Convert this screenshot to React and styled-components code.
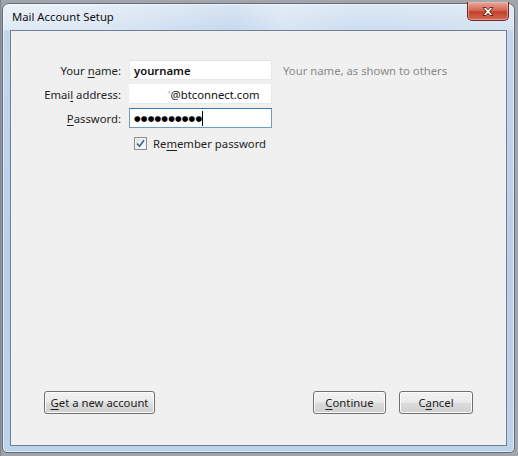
import styled, { createGlobalStyle } from 'styled-components';

const GlobalStyle = createGlobalStyle`
  html, body {
    margin: 0;
    padding: 0;
    background: #8e9095;
  }
  #root {
    width: 518px;
    height: 456px;
    overflow: hidden;
  }
`;

const font = `"Noto Sans", "Open Sans", "Liberation Sans", sans-serif`;
const size = '11.3px';

const Screen = styled.div`
  box-sizing: border-box;
  width: 518px;
  height: 456px;
  padding: 3px 3px 3px 2px;
  background: linear-gradient(to right, #7d7f83 0, #a2a6ab 2px, #a2a6ab 100%);
`;

const Window = styled.div`
  position: relative;
  box-sizing: border-box;
  width: 513px;
  height: 450px;
  display: flex;
  flex-direction: column;
  border: 1px solid #5b6e86;
  border-radius: 7px 7px 5px 5px;
  background: linear-gradient(to bottom, #d9e6f3 0, #c3d7ec 30px, #b7cfe8 60%, #bcd3ea 100%);
  box-shadow: inset 0 0 0 1px rgba(255, 255, 255, 0.55);
  padding: 0 7px 6px 7px;
  font-family: ${font};
`;

const TitleBar = styled.div`
  height: 26px;
  display: flex;
  align-items: center;
  margin: 0 -7px;
  padding: 0 0 0 9px;
  border-radius: 6px 6px 0 0;
  background: linear-gradient(
    to right,
    rgba(255, 255, 255, 0.45) 0,
    rgba(255, 255, 255, 0.35) 20%,
    rgba(255, 255, 255, 0) 45%,
    rgba(255, 255, 255, 0.3) 55%,
    rgba(255, 255, 255, 0.1) 70%,
    rgba(255, 255, 255, 0.25) 100%
  );
`;

const Title = styled.span`
  font-size: ${size};
  color: #101010;
  margin-top: -2px;
`;

const CloseButton = styled.div`
  position: absolute;
  top: -2px;
  right: 5px;
  width: 42px;
  height: 19px;
  box-sizing: border-box;
  border: 1px solid #6b2b22;
  border-top: none;
  border-radius: 0 0 5px 5px;
  background: linear-gradient(to bottom, #e8a89c 0, #d66a56 45%, #c2412b 55%, #d26a55 100%);
  box-shadow: inset 0 0 0 1px rgba(255, 200, 190, 0.5);
  display: flex;
  align-items: center;
  justify-content: center;
`;

const Client = styled.div`
  flex: 1;
  box-sizing: border-box;
  border: 1px solid #6f8198;
  background: #f0f0f0;
  display: flex;
  flex-direction: column;
  justify-content: space-between;
  padding: 29px 33px 31px 33px;
`;

const Form = styled.div`
  display: grid;
  grid-template-columns: 77px 143px auto;
  column-gap: 8px;
  row-gap: 4px;
  align-items: center;
`;

const Label = styled.label`
  font-size: ${size};
  color: #1e1e1e;
  text-align: right;
  white-space: nowrap;
  u {
    text-decoration-thickness: 1px;
    text-underline-offset: 2px;
  }
`;

const Field = styled.div`
  box-sizing: border-box;
  height: 20px;
  display: flex;
  align-items: center;
  background: #ffffff;
  border: 1px solid ${(p) => (p.$focused ? '#6d9cc8' : '#e3e9ef')};
  border-top-color: ${(p) => (p.$focused ? '#3d7bad' : p.$bare ? '#ffffff' : '#dde3e9')};
  border-left-color: ${(p) => (p.$bare ? '#ffffff' : p.$focused ? '#6d9cc8' : '#e3e9ef')};
  padding-left: ${(p) => p.$indent || '4px'};
  font-size: ${size};
  color: #101010;
  font-weight: ${(p) => (p.$bold ? 600 : 400)};
  white-space: nowrap;
  overflow: hidden;
`;

const Dots = styled.span`
  font-family: "DejaVu Sans", sans-serif;
  font-size: 7.6px;
  letter-spacing: 0.2px;
  color: #000;
  margin-top: 1px;
`;

const Caret = styled.span`
  display: inline-block;
  width: 1px;
  height: 15px;
  background: #000;
  margin-left: 0;
`;

const Hint = styled.span`
  font-size: ${size};
  color: #8a8a8a;
  padding-left: 3px;
  white-space: nowrap;
`;

const CheckRow = styled.div`
  display: flex;
  align-items: center;
  gap: 6px;
  margin: 8px 0 0 90px;
  font-size: ${size};
  color: #1e1e1e;
  u {
    text-decoration-thickness: 1px;
    text-underline-offset: 2px;
  }
`;

const CheckBox = styled.span`
  box-sizing: border-box;
  width: 13px;
  height: 13px;
  border: 1px solid #8f8f8f;
  background: linear-gradient(135deg, #dcdcdc 0, #f4f4f4 60%, #ffffff 100%);
  box-shadow: inset 0 0 0 1px #f3f3f3;
  display: flex;
  align-items: center;
  justify-content: center;
`;

const ButtonRow = styled.div`
  display: flex;
  align-items: center;
  gap: 13px;
`;

const Spacer = styled.div`
  flex: 1;
`;

const Button = styled.button`
  box-sizing: border-box;
  width: ${(p) => p.$width};
  height: 23px;
  border: 1px solid #707070;
  border-radius: 3px;
  background: linear-gradient(to bottom, #f2f2f2 0, #ebebeb 48%, #dddddd 52%, #cfcfcf 100%);
  box-shadow: inset 0 0 0 1px #fcfcfc;
  font-family: ${font};
  font-size: ${size};
  color: #1e1e1e;
  padding: 0;
  u {
    text-decoration-thickness: 1px;
    text-underline-offset: 2px;
  }
`;

function CloseGlyph() {
  return (
    <svg width="14" height="11" viewBox="0 0 14 11">
      <path
        d="M2 1.5 L5 1.5 L7 3.8 L9 1.5 L12 1.5 L8.6 5.5 L12 9.5 L9 9.5 L7 7.2 L5 9.5 L2 9.5 L5.4 5.5 Z"
        fill="#ffffff"
        stroke="#5a1e16"
        strokeWidth="0.9"
        strokeLinejoin="round"
      />
    </svg>
  );
}

function CheckMark() {
  return (
    <svg width="9" height="9" viewBox="0 0 9 9">
      <path d="M1 4.5 L3.5 7.2 L8 1.2" fill="none" stroke="#4a5e8c" strokeWidth="1.6" />
    </svg>
  );
}

export default function App() {
  return (
    <>
      <GlobalStyle />
      <Screen>
        <Window>
          <TitleBar>
            <Title>Mail Account Setup</Title>
          </TitleBar>
          <CloseButton>
            <CloseGlyph />
          </CloseButton>
          <Client>
            <div>
              <Form>
                <Label>
                  Your <u>n</u>ame:
                </Label>
                <Field $bold>yourname</Field>
                <Hint>Your name, as shown to others</Hint>

                <Label>
                  Emai<u>l</u> address:
                </Label>
                <Field $bare $indent="38px">
                  <span style={{ color: '#999' }}>'</span>@btconnect.com
                </Field>
                <span />

                <Label>
                  <u>P</u>assword:
                </Label>
                <Field $focused>
                  <Dots>●●●●●●●●●●</Dots>
                  <Caret />
                </Field>
                <span />
              </Form>
              <CheckRow>
                <CheckBox>
                  <CheckMark />
                </CheckBox>
                <span>
                  Re<u>m</u>ember password
                </span>
              </CheckRow>
            </div>
            <ButtonRow>
              <Button $width="111px">
                <u>G</u>et a new account
              </Button>
              <Spacer />
              <Button $width="73px">
                <u>C</u>ontinue
              </Button>
              <Button $width="74px">
                C<u>a</u>ncel
              </Button>
            </ButtonRow>
          </Client>
        </Window>
      </Screen>
    </>
  );
}
